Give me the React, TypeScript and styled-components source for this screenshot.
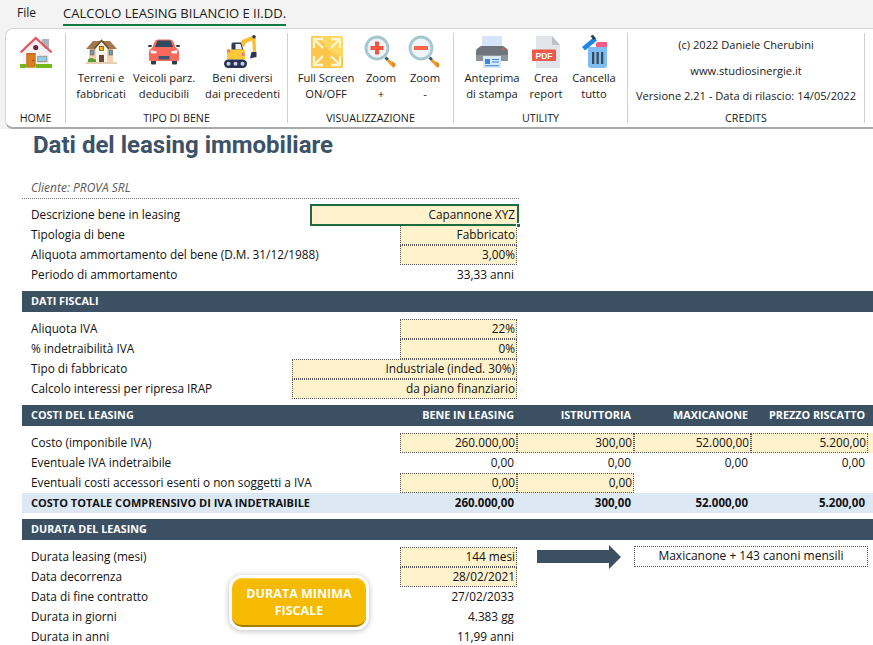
import { FC, ReactNode } from 'react';
import styled, { createGlobalStyle } from 'styled-components';

const GlobalStyle = createGlobalStyle`
	html, body {
		margin: 0;
		padding: 0;
		background: white;
		overflow: hidden;
	}
`;

const Page = styled.div`
	width: 873px;
	height: 645px;
	overflow: hidden;
	background: white;
	font-family: 'Open Sans', 'Liberation Sans', sans-serif;
	color: #1a1a1a;
`;

const Top = styled.div`
	background-color: #f3f3f3;
	height: 129px;
`;

const TabBar = styled.div`
	display: flex;
	height: 28px;
	padding-left: 17px;
	gap: 27px;
	font-size: 13px;
`;

const Tab = styled.div<{ $active?: boolean }>`
	height: 24px;
	line-height: 26px;
	white-space: nowrap;
	font-size: ${({ $active }) => ($active ? '13px' : '12px')};
	border-bottom: ${({ $active }) => ($active ? '2px solid #107c41' : 'none')};
`;

const Ribbon = styled.div`
	display: flex;
	box-sizing: border-box;
	height: 101px;
	margin-left: 5px;
	padding-top: 4px;
	background-color: white;
	border: 1px solid #d6d6d6;
	border-right: 0;
	border-bottom: 2px solid #a9a9a9;
	border-radius: 8px 0 0 8px;
`;

const Group = styled.div<{ $width: number }>`
	display: flex;
	flex-direction: column;
	box-sizing: border-box;
	width: ${({ $width }) => $width}px;
	height: 90px;
	border-right: 1px solid #d0d0d0;
`;

const GroupBody = styled.div<{ $pad?: number }>`
	display: flex;
	flex: 1;
	padding-left: ${({ $pad }) => $pad ?? 0}px;
	padding-top: 1px;
`;

const GroupLabel = styled.div`
	height: 15px;
	margin-bottom: -3px;
	font-size: 10.7px;
	line-height: 14px;
	text-align: center;
	white-space: nowrap;
`;

const RibbonButton = styled.div<{ $width: number }>`
	display: flex;
	flex-direction: column;
	align-items: center;
	width: ${({ $width }) => $width}px;
	font-size: 11.2px;
	line-height: 16px;
	text-align: center;
	white-space: nowrap;
`;

const IconBox = styled.svg`
	display: block;
	width: 34px;
	height: 34px;
	margin-bottom: 2px;
	overflow: visible;
	flex-shrink: 0;
`;

const Credits = styled.div`
	display: flex;
	flex-direction: column;
	flex: 1;
	margin-top: -1px;
	font-size: 11.1px;
	line-height: 25.5px;
	text-align: center;
	white-space: nowrap;
`;

const Sheet = styled.div`
	padding-left: 22px;
	font-size: 11.8px;
	color: #111;
`;

const Title = styled.h1`
	margin: 0;
	height: 33px;
	padding-left: 11px;
	font-family: Roboto, 'Liberation Sans', sans-serif;
	font-size: 24px;
	font-weight: 700;
	line-height: 32px;
	color: #3c5269;
	white-space: nowrap;
`;

const Client = styled.div`
	box-sizing: border-box;
	width: 497px;
	height: 37px;
	margin-bottom: 6px;
	padding: 16px 0 0 9px;
	border-bottom: 1px dotted #777;
	font-size: 12px;
	font-style: italic;
	line-height: 20px;
	color: #595959;
`;

const Section = styled.div`
	position: relative;
`;

const Row = styled.div`
	display: grid;
	grid-template-columns: 270px 18px 90px 117px 117px 117px 117px 5px;
	height: 20px;
	line-height: 19px;
`;

const Band = styled(Row)`
	height: 21px;
	margin: 6px 0 7px;
	background-color: #3c5064;
	color: white;
	font-weight: 700;
	font-size: 10.8px;
	line-height: 20px;
`;

const TotalRow = styled(Row)`
	background-color: #dce9f5;
	font-weight: 700;
	font-size: 11.5px;
	line-height: 20px;
`;

const Label = styled.div`
	grid-column: 1;
	padding-left: 9px;
	white-space: nowrap;
`;

const TotalLabel = styled(Label)`
	font-size: 11px;
`;

const Value = styled.div<{ $col?: number; $span?: number }>`
	grid-column: ${({ $col }) => $col ?? 4} / span ${({ $span }) => $span ?? 1};
	padding-right: 3px;
	text-align: right;
	white-space: nowrap;
`;

const Input = styled(Value)`
	box-sizing: border-box;
	background-color: #fff2cc;
	border: 1px dotted #555;
	padding-right: 1px;
	line-height: 17px;
`;

const InputTail = styled.div`
	grid-column: 8;
	background-color: #fff2cc;
`;

const Selected = styled(Value)`
	position: relative;
	z-index: 1;
	box-sizing: border-box;
	margin: -1px -2px -1px 0;
	padding-right: 2px;
	height: 22px;
	background-color: #fff2cc;
	border: 2px solid #1d6b41;
	line-height: 17px;

	&::after {
		content: '';
		position: absolute;
		right: -4px;
		bottom: -4px;
		width: 5px;
		height: 5px;
		background-color: #1d6b41;
		border: 1px solid white;
		box-sizing: border-box;
	}
`;

const NoteBox = styled(Value)`
	box-sizing: border-box;
	margin-top: -1px;
	border: 1px dotted #555;
	padding-right: 0;
	font-size: 12px;
	text-align: center;
	line-height: 18px;
`;

const ArrowCell = styled.div`
	grid-column: 5;
	position: relative;
`;

const ArrowIcon = styled.svg`
	display: block;
	width: 117px;
	height: 20px;
	overflow: visible;
`;

const MinimumButton = styled.div`
	position: absolute;
	left: 210px;
	top: 31px;
	box-sizing: border-box;
	width: 134px;
	height: 49px;
	padding-top: 7px;
	background-color: #f6ba00;
	border-radius: 10px;
	border-bottom: 2px solid #a67c00;
	box-shadow: 0 0 0 3px white, 0 1px 5px 4px rgba(0, 0, 0, 0.2), inset 0 1px 1px #ffd24d;
	color: #fdfdf0;
	font-size: 12.5px;
	font-weight: 700;
	line-height: 17px;
	text-align: center;
`;

const HomeIcon = () => (
	<IconBox viewBox="0 0 34 34">
		<rect x="23" y="5" width="7" height="10" fill="#a6b4ba" />
		<path d="M4 18 L16.7 6 L30 18 V32 H4 Z" fill="#f4f2f2" />
		<path d="M1.7 18.5 L16.7 4 L32.7 18.5" fill="none" stroke="#ec4f5f" strokeWidth="2.2" />
		<circle cx="16.7" cy="13.5" r="2.6" fill="#7a2430" />
		<circle cx="16.7" cy="13.5" r="1.2" fill="#3b4a5a" />
		<rect x="7.3" y="19" width="9.4" height="14.5" fill="#c8681c" />
		<rect x="8.6" y="20.4" width="6.8" height="13" fill="#d97f22" />
		<circle cx="14" cy="26.5" r=".7" fill="#6b3a10" />
		<rect x="18.3" y="21.8" width="10" height="6.4" fill="#9a8d7c" />
		<rect x="19.2" y="22.6" width="8.2" height="4.6" fill="#8fd0e6" />
		<rect x="1" y="30" width="6.3" height="4" fill="#72b81c" />
		<rect x="17" y="30" width="16" height="4" fill="#72b81c" />
	</IconBox>
);

const CottageIcon = () => (
	<IconBox viewBox="0 0 34 34">
		<rect x="2" y="28" width="31" height="2" fill="#e4cdb4" />
		<path d="M5 15 H29 V28 H5 Z" fill="#f8cfae" />
		<path d="M12 13 L17.500 8 L23 13 V28 H12 Z" fill="#fdf6ec" />
		<path d="M2 15 L9 7 H26 L33 15 H26 L17.500 7.500 L9 15 Z" fill="#a3784f" />
		<path d="M10 15 L17.500 6.500 L25 15" fill="none" stroke="#6f4b2e" strokeWidth="1.8" />
		<rect x="15.500" y="12.500" width="4" height="4" fill="#f6b800" stroke="#5e3d20" strokeWidth=".7" />
		<rect x="6.500" y="16" width="3.500" height="5" fill="#4aa3d8" stroke="#7d5a3a" strokeWidth=".6" />
		<rect x="25" y="16" width="3.500" height="5" fill="#4aa3d8" stroke="#7d5a3a" strokeWidth=".6" />
		<rect x="15" y="21" width="5" height="7" fill="#6a4a30" />
		<path d="M4 28 V25.500 Q7 23 10 25 L12 25.500 V28 Z" fill="#5aa02c" />
	</IconBox>
);

const CarIcon = () => (
	<IconBox viewBox="0 0 34 34">
		<rect x="4" y="25" width="5" height="5.500" rx="1" fill="#2a3f52" />
		<rect x="25" y="25" width="5" height="5.500" rx="1" fill="#2a3f52" />
		<rect x="1" y="11" width="4" height="2" rx="1" fill="#2a3f52" />
		<rect x="29" y="11" width="4" height="2" rx="1" fill="#2a3f52" />
		<path d="M8 7 Q9 5.500 11 5.500 H23 Q25 5.500 26 7 L29 14 Q32 15 32 18 V26 Q32 27 31 27 H3 Q2 27 2 26 V18 Q2 15 5 14 Z" fill="#f8685c" />
		<path d="M10.500 6.500 H23.500 L26 13 H8 Z" fill="#2f4a60" />
		<path d="M3.500 16 L10 17.500 L9 19.500 H4 Z" fill="#eef3f6" />
		<path d="M30.500 16 L24 17.500 L25 19.500 H30 Z" fill="#eef3f6" />
		<rect x="11.500" y="22" width="11" height="3.500" rx=".5" fill="#3b5a70" />
	</IconBox>
);

const ExcavatorIcon = () => (
	<IconBox viewBox="0 0 34 34">
		<path d="M14 11 L16 6 L26 2 H29 L30 5 L20 9 L18 13 Z" fill="#f8bf32" />
		<path d="M26 4 L29.500 3 L30 18 H27 Z" fill="#f8bf32" />
		<circle cx="28" cy="2.800" r="1.700" fill="#2a3352" />
		<path d="M25.500 18 H30.500 V23 L24 24.500 Z" fill="#2a3352" />
		<path d="M5.500 16 V10 Q5.500 8.500 7 8.500 H15 L17.500 16 Z" fill="#2f3a58" />
		<path d="M9.500 10 H14.500 L16 15.500 H9.500 Z" fill="#f0f3fa" />
		<rect x="1" y="15.500" width="18" height="10" rx="1" fill="#fbc938" />
		<rect x="1" y="15.500" width="3" height="3" fill="#f26ca0" />
		<rect x="16" y="19" width="2.500" height="3" fill="#f26ca0" />
		<rect x="-2" y="25.500" width="23" height="8.500" rx="4.200" fill="#2a3352" />
		<circle cx="2.500" cy="29.800" r="2" fill="#c7cfe6" />
		<circle cx="9.500" cy="29.800" r="2" fill="#c7cfe6" />
		<circle cx="16.500" cy="29.800" r="2" fill="#c7cfe6" />
	</IconBox>
);

const FullScreenIcon = () => (
	<IconBox viewBox="0 0 34 34">
		<rect x="2" y="2" width="32" height="32" rx="2" fill="#ffd65e" />
		<path d="M11 2 Q15 17 34 24 V32 Q34 34 32 34 H4 Q2 34 2 32 V4 Q2 2 4 2 Z" fill="#fcc64c" />
		<g stroke="#fff6d2" strokeWidth="2.300" fill="none">
			<path d="M5 14 V5 H14 M5.500 5.500 L14 14" />
			<path d="M22 5 H31 V14 M30.500 5.500 L22 14" />
			<path d="M5 22 V31 H14 M5.500 30.500 L14 22" />
			<path d="M22 31 H31 V22 M30.500 30.500 L22 22" />
		</g>
	</IconBox>
);

const ZoomIcon: FC<{ minus?: boolean }> = ({ minus }) => (
	<IconBox viewBox="0 0 34 34">
		<path d="M21.500 23.500 L24 26" stroke="#3d5a60" strokeWidth="3" />
		<path d="M24.500 25 L32 31.500 L29.500 34 L23 27.500 Z" fill="#f59a2e" />
		<path d="M28 27 L31.500 30 L29 33 Z" fill="#e27f1a" />
		<circle cx="13" cy="14" r="11" fill="#edf5f7" stroke="#a4c8cf" strokeWidth="2.800" />
		{minus ? (
			<rect x="6" y="12" width="14" height="4" rx=".5" fill="#f8644c" />
		) : (
			<path d="M11 7.500 H15 V12 H19.500 V16 H15 V20.500 H11 V16 H6.500 V12 H11 Z" fill="#f8553f" />
		)}
	</IconBox>
);

const PrinterIcon = () => (
	<IconBox viewBox="0 0 34 34">
		<rect x="7" y="2" width="20" height="12" fill="#d6e4f8" />
		<path d="M6 12 H28 L31 14 Q33 15 33 17 V27 H1 V17 Q1 15 3 14 Z" fill="#6e767c" />
		<rect x="1" y="21" width="32" height="6" fill="#8c9499" />
		<rect x="26" y="14.500" width="3.500" height="1.600" fill="#ea5a4a" />
		<rect x="8" y="22" width="18" height="12" fill="#d8e8fa" />
		<rect x="10" y="25" width="5" height="5" fill="#3d86d8" />
		<path d="M17 25.500 H24 M17 28 H24 M10 31.800 H24" stroke="#3d86d8" strokeWidth="1.100" />
	</IconBox>
);

const PdfIcon = () => (
	<IconBox viewBox="0 0 34 34">
		<path d="M7 2 H23 L31 11 V34 H7 Z" fill="#e1e5e9" />
		<path d="M23 2 L31 11 H23 Z" fill="#bcc2c8" />
		<rect x="3" y="15.500" width="24" height="11.500" rx=".5" fill="#f0584a" />
		<text x="15" y="24.500" fontFamily="'Liberation Sans', sans-serif" fontSize="8.500" fontWeight="700" fill="white" textAnchor="middle">
			PDF
		</text>
	</IconBox>
);

const TrashIcon = () => (
	<IconBox viewBox="0 0 34 34">
		<path d="M11 13 H30 V31 Q30 34 27 34 H14 Q11 34 11 31 Z" fill="#7fbdf5" />
		<path d="M19 10 Q19 8 21 8 H30 V13 H19 Z" fill="#f45a88" />
		<path d="M5 13 L17 3 L20 6.500 L8 16.500 Z" fill="#1f86e8" />
		<path d="M13.500 2 L16 0.800 L19 4.500 L16.500 6 Z" fill="#2a3f52" />
		<rect x="15" y="18" width="2.300" height="12" fill="#3c4a58" />
		<rect x="19.500" y="18" width="2.300" height="12" fill="#3c4a58" />
		<rect x="24" y="18" width="2.300" height="12" fill="#3c4a58" />
	</IconBox>
);

type ButtonProps = {
	width: number;
	icon: ReactNode;
	lines: [string, string];
};

const Button: FC<ButtonProps> = ({ width, icon, lines }) => (
	<RibbonButton $width={width}>
		{icon}
		<div>{lines[0]}</div>
		<div>{lines[1]}</div>
	</RibbonButton>
);

const App: FC = () => (
	<Page>
		<GlobalStyle />
		<Top>
			<TabBar>
				<Tab>File</Tab>
				<Tab $active>CALCOLO LEASING BILANCIO E II.DD.</Tab>
			</TabBar>
			<Ribbon>
				<Group $width={60}>
					<GroupBody>
						<RibbonButton $width={59}>
							<HomeIcon />
						</RibbonButton>
					</GroupBody>
					<GroupLabel>HOME</GroupLabel>
				</Group>
				<Group $width={222}>
					<GroupBody $pad={6}>
						<Button width={58} icon={<CottageIcon />} lines={['Terreni e', 'fabbricati']} />
						<Button width={68} icon={<CarIcon />} lines={['Veicoli parz.', 'deducibili']} />
						<Button width={89} icon={<ExcavatorIcon />} lines={['Beni diversi', 'dai precedenti']} />
					</GroupBody>
					<GroupLabel>TIPO DI BENE</GroupLabel>
				</Group>
				<Group $width={166}>
					<GroupBody $pad={3}>
						<Button width={70} icon={<FullScreenIcon />} lines={['Full Screen', 'ON/OFF']} />
						<Button width={40} icon={<ZoomIcon />} lines={['Zoom', '+']} />
						<Button width={48} icon={<ZoomIcon minus />} lines={['Zoom', '-']} />
					</GroupBody>
					<GroupLabel>VISUALIZZAZIONE</GroupLabel>
				</Group>
				<Group $width={174}>
					<GroupBody $pad={7}>
						<Button width={62} icon={<PrinterIcon />} lines={['Anteprima', 'di stampa']} />
						<Button width={46} icon={<PdfIcon />} lines={['Crea', 'report']} />
						<Button width={50} icon={<TrashIcon />} lines={['Cancella', 'tutto']} />
					</GroupBody>
					<GroupLabel>UTILITY</GroupLabel>
				</Group>
				<Group $width={237}>
					<Credits>
						<div>(c) 2022 Daniele Cherubini</div>
						<div>www.studiosinergie.it</div>
						<div>Versione 2.21 - Data di rilascio: 14/05/2022</div>
					</Credits>
					<GroupLabel>CREDITS</GroupLabel>
				</Group>
			</Ribbon>
		</Top>
		<Sheet>
			<Title>Dati del leasing immobiliare</Title>
			<Client>Cliente: PROVA SRL</Client>
			<Section>
				<Row>
					<Label>Descrizione bene in leasing</Label>
					<Selected $col={3} $span={2}>Capannone XYZ</Selected>
				</Row>
				<Row>
					<Label>Tipologia di bene</Label>
					<Input>Fabbricato</Input>
				</Row>
				<Row>
					<Label>Aliquota ammortamento del bene (D.M. 31/12/1988)</Label>
					<Input>3,00%</Input>
				</Row>
				<Row>
					<Label>Periodo di ammortamento</Label>
					<Value>33,33 anni</Value>
				</Row>
			</Section>
			<Band>
				<Label>DATI FISCALI</Label>
			</Band>
			<Section>
				<Row>
					<Label>Aliquota IVA</Label>
					<Input>22%</Input>
				</Row>
				<Row>
					<Label>% indetraibilità IVA</Label>
					<Input>0%</Input>
				</Row>
				<Row>
					<Label>Tipo di fabbricato</Label>
					<Input $col={2} $span={3}>Industriale (inded. 30%)</Input>
				</Row>
				<Row>
					<Label>Calcolo interessi per ripresa IRAP</Label>
					<Input $col={2} $span={3}>da piano finanziario</Input>
				</Row>
			</Section>
			<Band>
				<Label>COSTI DEL LEASING</Label>
				<Value $col={4}>BENE IN LEASING</Value>
				<Value $col={5}>ISTRUTTORIA</Value>
				<Value $col={6}>MAXICANONE</Value>
				<Value $col={7}>PREZZO RISCATTO</Value>
			</Band>
			<Section>
				<Row>
					<Label>Costo (imponibile IVA)</Label>
					<Input $col={4}>260.000,00</Input>
					<Input $col={5}>300,00</Input>
					<Input $col={6}>52.000,00</Input>
					<Input $col={7}>5.200,00</Input>
					<InputTail />
				</Row>
				<Row>
					<Label>Eventuale IVA indetraibile</Label>
					<Value $col={4}>0,00</Value>
					<Value $col={5}>0,00</Value>
					<Value $col={6}>0,00</Value>
					<Value $col={7}>0,00</Value>
				</Row>
				<Row>
					<Label>Eventuali costi accessori esenti o non soggetti a IVA</Label>
					<Input $col={4}>0,00</Input>
					<Input $col={5}>0,00</Input>
				</Row>
				<TotalRow>
					<TotalLabel>COSTO TOTALE COMPRENSIVO DI IVA INDETRAIBILE</TotalLabel>
					<Value $col={4}>260.000,00</Value>
					<Value $col={5}>300,00</Value>
					<Value $col={6}>52.000,00</Value>
					<Value $col={7}>5.200,00</Value>
				</TotalRow>
			</Section>
			<Band>
				<Label>DURATA DEL LEASING</Label>
			</Band>
			<Section>
				<Row>
					<Label>Durata leasing (mesi)</Label>
					<Input>144 mesi</Input>
					<ArrowCell>
						<ArrowIcon viewBox="0 0 117 20">
							<path d="M20 3 H92 V-2 L104 10 L92 22 V16 H20 Z" fill="#3c5064" />
						</ArrowIcon>
					</ArrowCell>
					<NoteBox $col={6} $span={2}>Maxicanone + 143 canoni mensili</NoteBox>
				</Row>
				<Row>
					<Label>Data decorrenza</Label>
					<Input>28/02/2021</Input>
				</Row>
				<Row>
					<Label>Data di fine contratto</Label>
					<Value>27/02/2033</Value>
				</Row>
				<Row>
					<Label>Durata in giorni</Label>
					<Value>4.383 gg</Value>
				</Row>
				<Row>
					<Label>Durata in anni</Label>
					<Value>11,99 anni</Value>
				</Row>
				<MinimumButton>
					DURATA MINIMA
					<br />
					FISCALE
				</MinimumButton>
			</Section>
		</Sheet>
	</Page>
);

export default App;
